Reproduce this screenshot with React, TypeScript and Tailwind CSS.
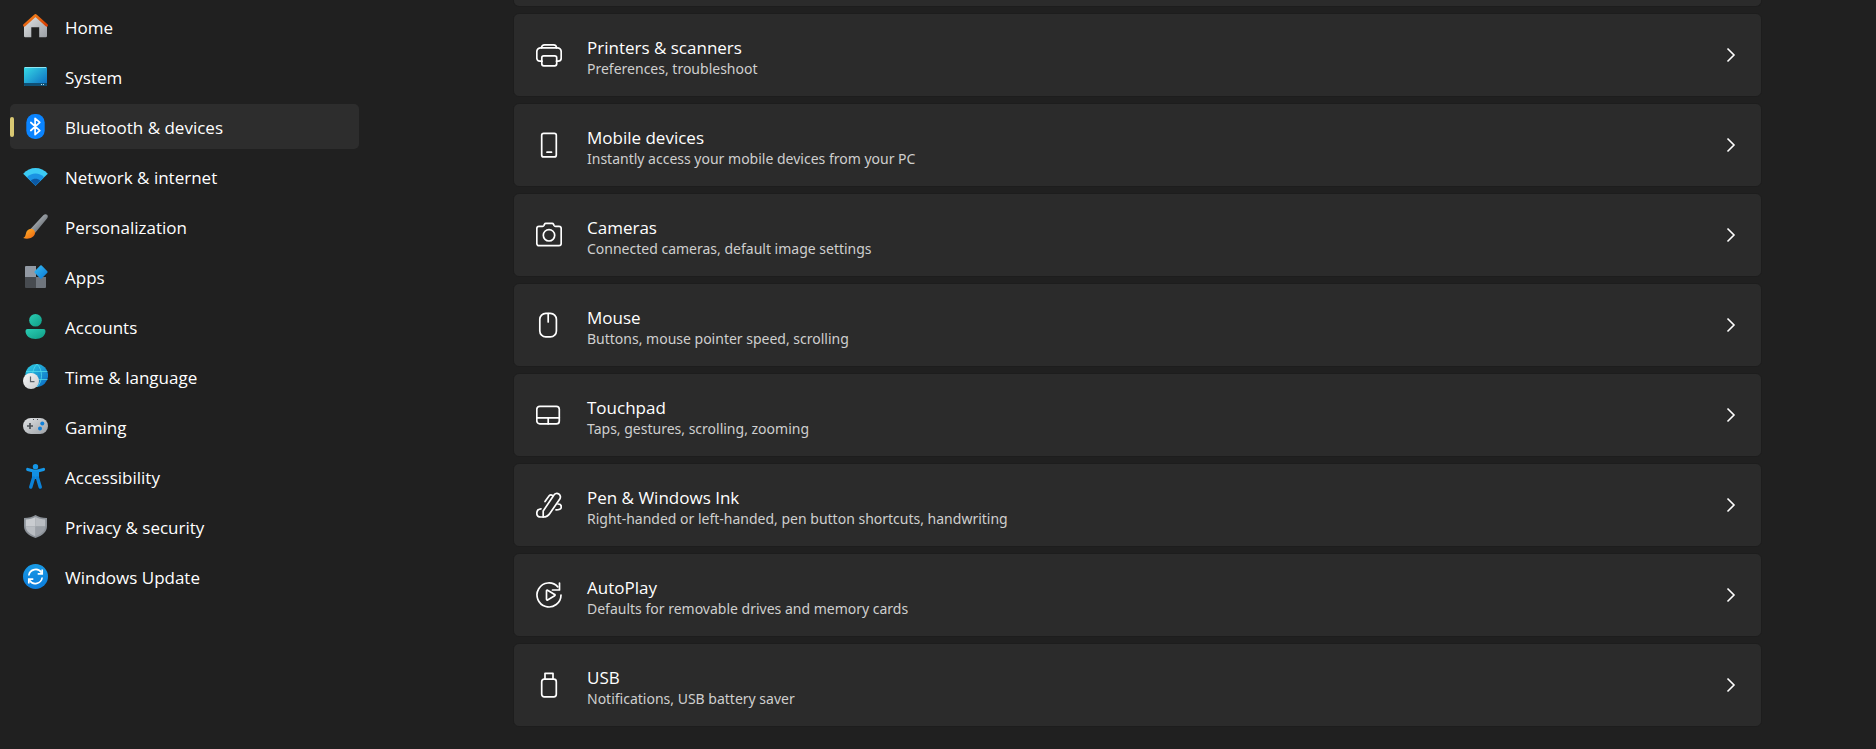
import React, { useState } from 'react';

interface NavItem {
  id: string;
  label: string;
  icon: React.ReactNode;
}

interface DeviceCard {
  title: string;
  description: string;
  icon: React.ReactNode;
}

const navItems: NavItem[] = [
  {
    id: 'home',
    label: 'Home',
    icon: (
      <>
        <path d="M1 11 12.500 1.500 24 11V22a1.200 1.200 0 0 1-1.200 1.200H16.200V13.300H8.300v9.900H2.200A1.200 1.200 0 0 1 1 22z" fill="url(#silver)" />
        <path d="M1.400 11.300 12 1.700c.3-.3.700-.3 1 0l10.600 9.600" fill="none" stroke="url(#roof)" strokeWidth="2.600" strokeLinecap="round" strokeLinejoin="round" />
      </>
    ),
  },
  {
    id: 'system',
    label: 'System',
    icon: (
      <>
        <rect x="1" y="3" width="23" height="19" rx="1" fill="url(#screen)" />
        <path d="M1 19h23v2a1 1 0 0 1-1 1H2a1 1 0 0 1-1-1z" fill="#0f4f74" />
        <path d="M2 3.500h21" stroke="#8fe6f2" strokeWidth="1" />
        <path d="M18 20.500h1M20 20.500h1" stroke="#b8dff0" strokeWidth="1" />
      </>
    ),
  },
  {
    id: 'bluetooth',
    label: 'Bluetooth & devices',
    icon: (
      <>
        <rect x="3.300" y="0" width="18.400" height="25" rx="8.500" fill="#0a84ff" />
        <path d="m7.800 8.500 9 8.200-4.700 4V4.300l4.700 4-9 8.200" fill="none" stroke="#fff" strokeWidth="1.700" strokeLinejoin="round" strokeLinecap="round" />
      </>
    ),
  },
  {
    id: 'network',
    label: 'Network & internet',
    icon: (
      <>
        <path d="M.2 9.700C6.800 2.200 18.200 2.200 24.800 9.700L12.500 21.800z" fill="#3ccbf4" />
        <path d="M3.900 13.200c4.800-5 12.400-5 17.200 0l-8.600 8.600z" fill="#1b93e3" />
        <path d="M7.700 16.800c2.800-2.600 6.800-2.600 9.600 0l-4.800 5z" fill="#0c59a4" />
      </>
    ),
  },
  {
    id: 'personalization',
    label: 'Personalization',
    icon: (
      <>
        <path d="M7.500 15 20.300 1.300c1.200-1.200 2.700-1.500 3.800-.5 1 1 .9 2.500-.1 3.700L12 19z" fill="url(#handle)" />
        <path d="M.2 24c1.700-.8 2.200-2 2.600-4 .6-3 2.500-5.200 5.200-5.200 2.400 0 4.200 1.900 4 4.300-.3 4.400-6.500 6.800-11.800 4.900z" fill="url(#bristle)" />
      </>
    ),
  },
  {
    id: 'apps',
    label: 'Apps',
    icon: (
      <>
        <path d="M3 2h10v11H2V3a1 1 0 0 1 1-1z" fill="#9299a3" />
        <path d="M2 13h11v11H3a1 1 0 0 1-1-1z" fill="#474b50" />
        <path d="M13 13h10v10a1 1 0 0 1-1 1h-9z" fill="#6f757d" />
        <path d="M17.300 1.500a1 1 0 0 1 1.400 0l5.600 5.800a1 1 0 0 1 0 1.400l-5.600 5.800a1 1 0 0 1-1.400 0l-5.600-5.800a1 1 0 0 1 0-1.400z" fill="url(#azure)" />
      </>
    ),
  },
  {
    id: 'accounts',
    label: 'Accounts',
    icon: (
      <>
        <circle cx="12.500" cy="6.300" r="6.300" fill="url(#teal)" />
        <path d="M4.500 15h16a2 2 0 0 1 2 2c0 5-4.500 8-10 8s-10-3-10-8a2 2 0 0 1 2-2z" fill="url(#teal)" />
      </>
    ),
  },
  {
    id: 'time',
    label: 'Time & language',
    icon: (
      <>
        <circle cx="13.700" cy="11.400" r="11.400" fill="url(#globe)" />
        <path d="M3 7.500h21.500M3 15.500h21.500M14 0C8 6 8 17 14 23M14 0c6 6 6 17 0 23" fill="none" stroke="#4fd8ea" strokeWidth="1" opacity=".8" />
        <circle cx="8" cy="17" r="8" fill="url(#clock)" />
        <path d="M7.500 12.500V17.700H11.500" fill="none" stroke="#5b6168" strokeWidth="1.200" />
      </>
    ),
  },
  {
    id: 'gaming',
    label: 'Gaming',
    icon: (
      <>
        <rect x="0" y="4" width="25" height="16" rx="8" fill="url(#silver)" />
        <path d="M7 9v6M4 12h6" stroke="#4b5055" strokeWidth="1.700" />
        <path d="M10 5.500h1M14 5.500h1" stroke="#4b5055" strokeWidth="1.200" />
        <circle cx="19.300" cy="9.500" r="2" fill="#0f7fd8" />
        <circle cx="17" cy="14.500" r="2" fill="#0f7fd8" />
      </>
    ),
  },
  {
    id: 'accessibility',
    label: 'Accessibility',
    icon: (
      <>
        <circle cx="12.500" cy="2.700" r="2.700" fill="#1597e8" />
        <path d="M4.700 5.500 12.500 7.500 20.500 5.500" fill="none" stroke="#1597e8" strokeWidth="3.200" strokeLinecap="round" strokeLinejoin="round" />
        <path d="M9 7h7v8H9z" fill="#1290e4" />
        <path d="M10.500 14 7.800 23M14.500 14l2.700 9" stroke="#0b82d8" strokeWidth="3.400" strokeLinecap="round" />
      </>
    ),
  },
  {
    id: 'privacy',
    label: 'Privacy & security',
    icon: (
      <>
        <path d="M12.500 1c3 2 6.700 3 11.500 3v8c0 6-4.500 9.500-11.500 12C5.500 21.500 1 18 1 12V4c4.800 0 8.500-1 11.500-3z" fill="#8c9299" />
        <path d="M12.500 3v9.500H2.800V5.500c3.700-.2 6.900-1 9.700-2.500z" fill="#c9ccd0" />
        <path d="M12.500 3c2.800 1.500 6 2.300 9.700 2.500v7h-9.700z" fill="#b9bdc2" />
        <path d="M2.800 12.500h9.700v9.800c-5.500-2.200-9.500-5-9.700-9.800z" fill="#b9bdc2" />
        <path d="M12.500 12.500h9.700c-.2 4.800-4.200 7.600-9.700 9.800z" fill="#9ca1a8" />
      </>
    ),
  },
  {
    id: 'update',
    label: 'Windows Update',
    icon: (
      <>
        <circle cx="12.500" cy="12.500" r="12.500" fill="url(#update)" />
        <path d="M5.800 11.500a7 7 0 0 1 12.800-2.800M19.200 13.500a7 7 0 0 1-12.800 2.800" fill="none" stroke="#fff" strokeWidth="1.700" />
        <path d="M19.200 5.500v4.300h-4.500M5.800 19.500v-4.300h4.500" fill="none" stroke="#fff" strokeWidth="1.700" />
      </>
    ),
  },
];

const deviceCards: DeviceCard[] = [
  {
    title: 'Printers & scanners',
    description: 'Preferences, troubleshoot',
    icon: (
      <>
        <path d="M6 19.200H3.800a3 3 0 0 1-3-3v-6.400a4 4 0 0 1 4-4h16.400a4 4 0 0 1 4 4v6.400a3 3 0 0 1-3 3H20.500" />
        <path d="M5.500 5.800a3 3 0 0 1 3-3h9a3 3 0 0 1 3 3" />
        <rect x="5.800" y="13.800" width="14.900" height="10" rx="2" />
      </>
    ),
  },
  {
    title: 'Mobile devices',
    description: 'Instantly access your mobile devices from your PC',
    icon: (
      <>
        <rect x="5.700" y="1.300" width="14.600" height="23.600" rx="2" />
        <path d="M11 20.200h4.500" />
      </>
    ),
  },
  {
    title: 'Cameras',
    description: 'Connected cameras, default image settings',
    icon: (
      <>
        <path d="M3 4.300h3.500c.8 0 1.200-.4 1.500-1l.4-.9c.3-.6.800-1 1.500-1h6.200c.7 0 1.200.4 1.500 1l.4.900c.3.600.7 1 1.500 1H23a2.200 2.200 0 0 1 2.200 2.200v15a2.200 2.200 0 0 1-2.200 2.200H3a2.200 2.200 0 0 1-2.200-2.200v-15A2.200 2.200 0 0 1 3 4.300z" />
        <circle cx="13" cy="13.300" r="5.700" />
      </>
    ),
  },
  {
    title: 'Mouse',
    description: 'Buttons, mouse pointer speed, scrolling',
    icon: (
      <>
        <rect x="3.800" y="1.300" width="16.600" height="23.600" rx="6" />
        <path d="M12.200 1.500v8.500" />
      </>
    ),
  },
  {
    title: 'Touchpad',
    description: 'Taps, gestures, scrolling, zooming',
    icon: (
      <>
        <rect x="0.800" y="4.300" width="22.500" height="17.600" rx="3" />
        <path d="M1 15.800h22.300M12.200 15.800v6" />
      </>
    ),
  },
  {
    title: 'Pen & Windows Ink',
    description: 'Right-handed or left-handed, pen button shortcuts, handwriting',
    icon: (
      <>
        <path d="M7.200 25V19L17.800 3.200a3.500 3.500 0 0 1 5-1.200 3.500 3.500 0 0 1 1 4.900L13.800 21.500c-1.300 2-3.600 3.500-6.600 3.500z" />
        <path d="m9 9.600 3.600-5.100a3 3 0 0 1 4-1" />
        <path d="M5 16.800C2.500 17 .8 18.900.8 21.300.8 23.500 2.500 25 4.800 25h2.400" />
        <path d="M22 12c2 0 3.300 1.200 3.300 2.900s-1.300 2.900-5.300 2.900" />
      </>
    ),
  },
  {
    title: 'AutoPlay',
    description: 'Defaults for removable drives and memory cards',
    icon: (
      <>
        <path d="M25 13A12 12 0 1 1 21.800 4.800" />
        <path d="M23.500 1v7h-7" />
        <path d="M10.500 8.800v8.500c0 .6.600.9 1.100.6l7-4.200a.7.700 0 0 0 0-1.300l-7-4.200a.7.700 0 0 0-1.100.6z" />
      </>
    ),
  },
  {
    title: 'USB',
    description: 'Notifications, USB battery saver',
    icon: (
      <>
        <path d="M9 7V1.300h8V7" />
        <rect x="5.700" y="7.200" width="14.600" height="17.600" rx="2.500" />
      </>
    ),
  },
];

// Shared fills for the coloured sidebar icons
function IconGradients() {
  return (
    <svg className="absolute w-0 h-0" aria-hidden="true">
      <defs>
        <linearGradient id="silver" x1="0" y1="0" x2="1" y2="1">
          <stop offset="0" stopColor="#e2e4e6" />
          <stop offset="1" stopColor="#9b9fa4" />
        </linearGradient>
        <linearGradient id="roof" x1="0" y1="0" x2="1" y2="1">
          <stop offset="0" stopColor="#f58a1f" />
          <stop offset="1" stopColor="#d83b01" />
        </linearGradient>
        <linearGradient id="screen" x1="0" y1="0" x2="1" y2="1">
          <stop offset="0" stopColor="#37dbe6" />
          <stop offset="1" stopColor="#0b68c0" />
        </linearGradient>
        <linearGradient id="handle" x1="0" y1="0" x2="1" y2="1">
          <stop offset="0.200" stopColor="#b4bac0" />
          <stop offset="0.800" stopColor="#62676d" />
        </linearGradient>
        <linearGradient id="bristle" x1="0" y1="0" x2="1" y2="1">
          <stop offset="0" stopColor="#ffb72b" />
          <stop offset="1" stopColor="#ee6410" />
        </linearGradient>
        <linearGradient id="azure" x1="0" y1="0" x2="1" y2="1">
          <stop offset="0" stopColor="#36bdf5" />
          <stop offset="1" stopColor="#0b78d4" />
        </linearGradient>
        <linearGradient id="teal" x1="0" y1="0" x2="1" y2="1">
          <stop offset="0" stopColor="#2bcdb4" />
          <stop offset="1" stopColor="#0f9c85" />
        </linearGradient>
        <linearGradient id="globe" x1="0" y1="0" x2="1" y2="1">
          <stop offset="0" stopColor="#2fcfe2" />
          <stop offset="1" stopColor="#0a68c4" />
        </linearGradient>
        <linearGradient id="clock" x1="0" y1="0" x2="1" y2="1">
          <stop offset="0" stopColor="#f7f7f7" />
          <stop offset="1" stopColor="#c8cbce" />
        </linearGradient>
        <linearGradient id="update" x1="0" y1="0" x2="0" y2="1">
          <stop offset="0" stopColor="#199be6" />
          <stop offset="1" stopColor="#0b7cdb" />
        </linearGradient>
      </defs>
    </svg>
  );
}

export default function App() {
  const [activeId, setActiveId] = useState('bluetooth');

  return (
    <div className="min-h-screen bg-[#202020] text-white flex items-start overflow-hidden font-['Open_Sans',sans-serif]">
      <IconGradients />

      {/* Sidebar */}
      <nav className="w-[359px] shrink-0 pl-[10px] pt-1 flex flex-col gap-[5px]">
        {navItems.map((item) => {
          const isActive = item.id === activeId;

          return (
            <button
              key={item.id}
              type="button"
              onClick={() => setActiveId(item.id)}
              className={`relative h-[45px] w-full rounded-[5px] flex items-center gap-[17px] pl-[13px] text-left text-[17px] leading-6 ${
                isActive ? 'bg-[#2d2d2d]' : 'hover:bg-[#2d2d2d]'
              }`}
            >
              {isActive && <span className="absolute left-0 top-[13px] w-1 h-5 rounded-full bg-[#d9c872]"></span>}
              <svg viewBox="0 0 25 25" className="w-[25px] h-[25px] shrink-0" aria-hidden="true">
                {item.icon}
              </svg>
              <span className="pt-0.5">{item.label}</span>
            </button>
          );
        })}
      </nav>

      {/* Device settings list */}
      <main className="flex-1 min-w-0 pl-[154px] pr-[114px] pb-[22px] flex flex-col gap-[6px]">
        <div className="h-[7px] rounded-b-md bg-[#2b2b2b] border border-t-0 border-[#1d1d1d]"></div>
        {deviceCards.map((card) => (
          <button
            key={card.title}
            type="button"
            className="h-[84px] w-full rounded-md bg-[#2b2b2b] border border-[#1d1d1d] hover:bg-[#323232] flex items-center pl-[22px] pr-[25px] text-left"
          >
            <svg
              viewBox="0 0 26 26"
              className="w-[26px] h-[26px] shrink-0"
              fill="none"
              stroke="currentColor"
              strokeWidth="1.700"
              strokeLinecap="round"
              strokeLinejoin="round"
              aria-hidden="true"
            >
              {card.icon}
            </svg>
            <span className="flex-1 min-w-0 pl-[25px] pt-[5px] flex flex-col">
              <span className="text-[17px] leading-[22px]">{card.title}</span>
              <span className="text-sm leading-5 text-[#cfcfcf] font-['Noto_Sans',sans-serif]">{card.description}</span>
            </span>
            <svg viewBox="0 0 10 16" className="w-[10px] h-4 shrink-0" fill="none" stroke="currentColor" strokeWidth="1.600" aria-hidden="true">
              <path d="M1.500 1.500 8 8l-6.500 6.500" />
            </svg>
          </button>
        ))}
      </main>
    </div>
  );
}
